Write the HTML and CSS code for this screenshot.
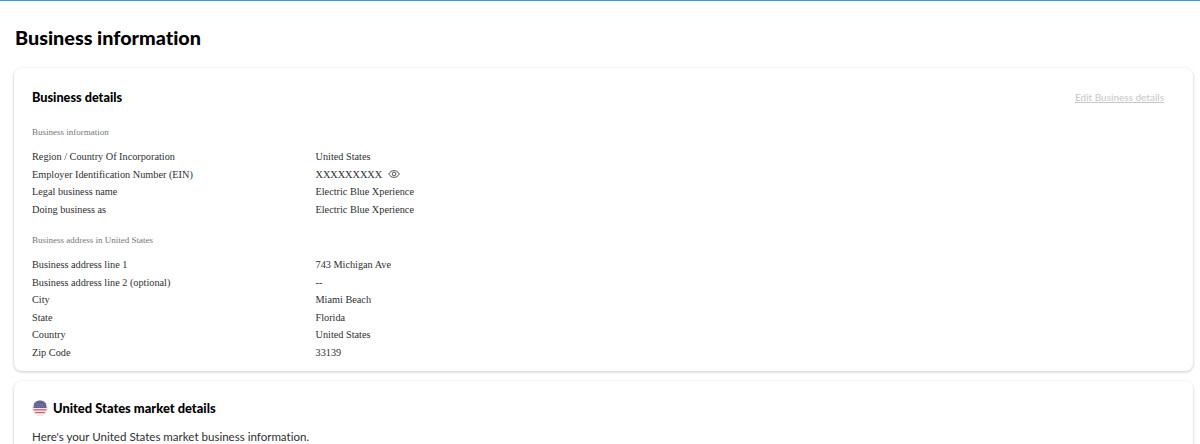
FILE: index.html
```html
<!DOCTYPE html>
<html lang="en">
<head>
<meta charset="utf-8">
<title>Business information</title>
<link rel="stylesheet" href="styles.css">
</head>
<body>
<main class="page">
  <h1 class="page-title">Business information</h1>
  <section class="card card-details">
    <header class="card-head">
      <h2 class="card-title card-title-details">Business details</h2>
      <a class="edit-link" href="#">Edit Business details</a>
    </header>
    <h3 class="group-label">Business information</h3>
    <dl class="rows">
      <div class="row"><dt>Region / Country Of Incorporation</dt><dd>United States</dd></div>
      <div class="row"><dt>Employer Identification Number (EIN)</dt><dd class="masked">XXXXXXXXX
        <svg class="eye" viewBox="0 0 12 10" width="12" height="10" aria-hidden="true"><path d="M.7 5C2 2.8 3.8 1.600 6 1.600S10 2.800 11.300 5C10 7.200 8.200 8.400 6 8.400S2 7.200.7 5Z" fill="none" stroke="#444" stroke-width=".9"/><circle cx="6" cy="5" r="1.800" fill="none" stroke="#444" stroke-width=".9"/></svg></dd></div>
      <div class="row"><dt>Legal business name</dt><dd>Electric Blue Xperience</dd></div>
      <div class="row"><dt>Doing business as</dt><dd>Electric Blue Xperience</dd></div>
    </dl>
    <h3 class="group-label group-label-next">Business address in United States</h3>
    <dl class="rows">
      <div class="row"><dt>Business address line 1</dt><dd>743 Michigan Ave</dd></div>
      <div class="row"><dt>Business address line 2 (optional)</dt><dd>--</dd></div>
      <div class="row"><dt>City</dt><dd>Miami Beach</dd></div>
      <div class="row"><dt>State</dt><dd>Florida</dd></div>
      <div class="row"><dt>Country</dt><dd>United States</dd></div>
      <div class="row"><dt>Zip Code</dt><dd>33139</dd></div>
    </dl>
  </section>
  <section class="card card-market">
    <div class="market-head">
      <svg class="flag" viewBox="0 0 16 16" width="16" height="16" aria-hidden="true">
        <circle cx="8" cy="8" r="8" fill="#ece6ea"/>
        <path d="M2.200 3.500A7 7 0 0 1 13.800 3.500L14.600 8H1.400Z" fill="#5f6390"/>
        <path d="M4 4.500H12M3 6.500H13" stroke="#8f92b4" stroke-width=".6" stroke-dasharray="1 1"/>
        <path d="M1.500 9.200H14.500V10.400H1.500Z" fill="#d9525e"/>
        <path d="M3 12H13V13H3Z" fill="#d9525e"/>
      </svg>
      <h2 class="card-title card-title-market">United States market details</h2>
    </div>
    <p class="market-text">Here's your United States market business information.</p>
  </section>
</main>
</body>
</html>
```
FILE: styles.css
```css
* { box-sizing: border-box; }
html, body { height: 100%; }
body {
  margin: 0;
  height: 444px;
  overflow: hidden;
  background: #fff;
  border-top: 1px solid #3d97e8;
  font-family: "Liberation Serif", serif;
  color: #2e2f32;
}
.page { padding: 0 7px 0 14px; }
.page-title {
  margin: 0;
  padding: 23px 0 0 1px;
  height: 67px;
  font: 900 19.800px/26px Lato, sans-serif;
  font-variant-ligatures: none;
  color: #000;
}
.card {
  background: #fff;
  border-radius: 8px;
  box-shadow: 0 1px 2px 1px rgba(0, 0, 0, .13);
  padding: 0 18px;
}
.card-details { height: 303px; }
.card-market { margin-top: 10px; height: 80px; }
.card-head {
  display: flex;
  justify-content: space-between;
  align-items: center;
  height: 58px;
  padding-right: 11px;
}
.card-title {
  margin: 0;
  font: 900 12.900px/18px Lato, sans-serif;
  color: #000;
}
.card-title-details { font-size: 12.700px; }
.edit-link {
  font: 400 10px/14px Lato, sans-serif;
  color: #c4c6ca;
  text-decoration: underline;
}
.group-label {
  margin: 0;
  font-size: 9px;
  font-weight: 400;
  line-height: 12px;
  color: #74767c;
}
.group-label-next { margin-top: 16px; }
.rows { margin: 10px 0 0; }
.row {
  display: grid;
  grid-template-columns: 283.500px 1fr;
  height: 17.500px;
  font-size: 10.250px;
  line-height: 17.500px;
}
.row dt, .row dd { margin: 0; }
.masked { display: flex; align-items: center; gap: 6px; }
.market-head {
  display: flex;
  align-items: center;
  gap: 5px;
  padding-top: 18px;
}
.flag { flex: none; }
.market-text {
  margin: 12px 0 0;
  font: 400 11.550px/16px Lato, sans-serif;
  font-variant-ligatures: none;
  color: #2e2f32;
}
```
